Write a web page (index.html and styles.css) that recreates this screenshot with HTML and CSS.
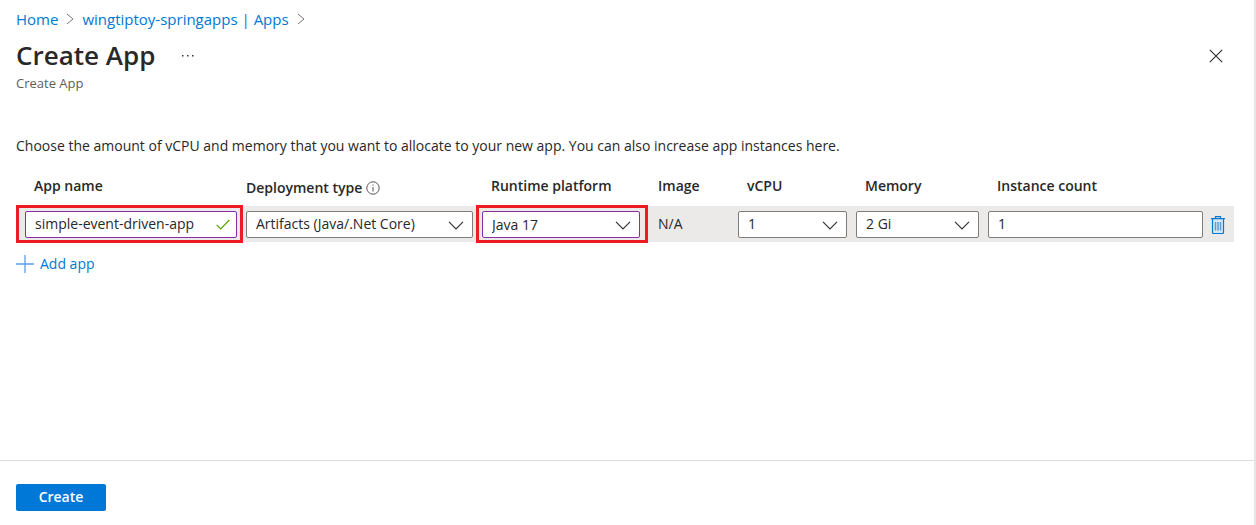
FILE: index.html
```
<!DOCTYPE html>
<html lang="en">
<head>
<meta charset="utf-8">
<title>Create App</title>
<link rel="stylesheet" href="styles.css">
</head>
<body>
<div class="blade">
  <header class="top">
    <nav class="breadcrumb" aria-label="Breadcrumb">
      <a href="#">Home</a>
      <svg class="crumb-sep" viewBox="0 0 8 12" aria-hidden="true"><path d="M1 1l6 5-6 5"/></svg>
      <a href="#">wingtiptoy-springapps | Apps</a>
      <svg class="crumb-sep" viewBox="0 0 8 12" aria-hidden="true"><path d="M1 1l6 5-6 5"/></svg>
    </nav>
    <div class="title-row">
      <h1>Create App</h1>
      <button class="icon-button more" type="button" aria-label="More">
        <svg viewBox="0 0 14 4" width="14" height="4"><path d="M1 1h1.500v1.500H1zM6 1h1.500v1.500H6zM11 1h1.500v1.500H11z"/></svg>
      </button>
      <button class="icon-button close" type="button" aria-label="Close">
        <svg viewBox="0 0 14 14" width="14" height="14"><path d="M.8.8l12.400 12.400M13.200.8L.8 13.200"/></svg>
      </button>
    </div>
    <p class="subtitle">Create App</p>
  </header>

  <main class="content">
    <p class="intro">Choose the amount of vCPU and memory that you want to allocate to your new app. You can also increase app instances here.</p>
    <table class="apps">
      <colgroup>
        <col class="col-name"><col class="col-type"><col class="col-runtime"><col class="col-image">
        <col class="col-cpu"><col class="col-memory"><col class="col-count"><col class="col-delete">
      </colgroup>
      <thead>
        <tr>
          <th class="head-name"><label for="name">App name</label></th>
          <th class="head-type"><span class="with-info"><label for="type">Deployment type</label>
            <svg class="info" viewBox="0 0 14 14" aria-hidden="true"><circle cx="7" cy="7" r="6.200"/><path d="M7 6v4.500M7 3.500v1.200"/></svg></span></th>
          <th class="head-runtime"><label for="runtime">Runtime platform</label></th>
          <th class="head-image">Image</th>
          <th class="head-inset"><label for="cpu">vCPU</label></th>
          <th class="head-inset"><label for="memory">Memory</label></th>
          <th class="head-inset"><label for="count">Instance count</label></th>
          <td></td>
        </tr>
      </thead>
      <tbody>
        <tr>
          <td class="cell-name"><div class="highlight highlight-name"><div class="field valid">
            <input id="name" type="text" value="simple-event-driven-app">
            <svg class="check" viewBox="0 0 14 11" aria-hidden="true"><path d="M.7 5.800l4 4L13.300 1"/></svg>
          </div></div></td>
          <td class="cell-type"><div class="field">
            <select id="type"><option>Artifacts (Java/.Net Core)</option></select>
            <svg class="chevron" viewBox="0 0 16 9" aria-hidden="true"><path d="M1 .8l7 7 7-7"/></svg>
          </div></td>
          <td class="cell-runtime"><div class="highlight highlight-runtime"><div class="field changed">
            <select id="runtime"><option>Java 17</option></select>
            <svg class="chevron" viewBox="0 0 16 9" aria-hidden="true"><path d="M1 .8l7 7 7-7"/></svg>
          </div></div></td>
          <td class="cell-image">N/A</td>
          <td class="cell-inset"><div class="field">
            <select id="cpu"><option>1</option></select>
            <svg class="chevron" viewBox="0 0 16 9" aria-hidden="true"><path d="M1 .8l7 7 7-7"/></svg>
          </div></td>
          <td class="cell-inset"><div class="field">
            <select id="memory"><option>2 Gi</option></select>
            <svg class="chevron" viewBox="0 0 16 9" aria-hidden="true"><path d="M1 .8l7 7 7-7"/></svg>
          </div></td>
          <td class="cell-inset"><div class="field"><input id="count" type="text" value="1"></div></td>
          <td class="cell-delete"><button class="icon-button delete" type="button" aria-label="Delete">
            <svg viewBox="0 0 16 18" width="16" height="18"><path class="bin" d="M2.500 3v13.500a1 1 0 0 0 1 1h9a1 1 0 0 0 1-1V3"/><path class="lid" d="M1 2.700h14M5.500 2.500V.6h5v1.900"/><path class="bars" d="M5.500 6v8.500M8 6v8.500M10.500 6v8.500"/></svg>
          </button></td>
        </tr>
      </tbody>
    </table>
    <button class="add" type="button">
      <svg viewBox="0 0 18 18" width="18" height="18" aria-hidden="true"><path d="M9 0v18M0 9h18"/></svg>
      <span>Add app</span>
    </button>
  </main>

  <footer class="footer"><button class="primary" type="button">Create</button></footer>
</div>
</body>
</html>
```
FILE: styles.css
```
* { box-sizing: border-box; }
body {
  margin: 0;
  background: #fff;
  color: #292827;
  font: 14px/20px "Open Sans", "Noto Sans", sans-serif;
}
button, input, select { font: inherit; color: inherit; }
button { cursor: pointer; }
h1, p { margin: 0; }
svg { display: block; flex: none; fill: none; }

.blade {
  display: flex;
  flex-direction: column;
  min-height: 100vh;
  border-right: 2px solid #e6e6e6;
}

.top { padding: 9px 28px 0 16px; }
.breadcrumb { display: flex; align-items: center; gap: 8px; font-size: 15px; }
.breadcrumb a { color: #0078d4; text-decoration: none; }
.crumb-sep { width: 8px; height: 12px; stroke: #777; }
.title-row { display: flex; align-items: center; height: 34px; margin-top: 9px; }
h1 { font-size: 26px; line-height: 34px; font-weight: 600; }
.icon-button { padding: 0; border: 0; background: none; }
.more { margin-left: 26px; padding-top: 2px; }
.more path { fill: #333; }
.close { margin-left: auto; padding: 5px 3px 3px; }
.close path { stroke: #333; stroke-width: 1.200; }
.subtitle { padding-top: 1px; color: #605e5c; font-size: 13px; line-height: 20px; }

.content { flex: 1; padding: 43px 20px 0 16px; }
.intro { margin-bottom: 18px; }

.apps { width: 100%; border-collapse: collapse; table-layout: fixed; }
.col-name, .col-type { width: 230px; }
.col-runtime { width: 176px; }
.col-image { width: 80px; }
.col-cpu { width: 118px; }
.col-memory { width: 132px; }
.col-delete { width: 28px; }
.apps th { height: 32px; padding: 2px 0 0; font-weight: 600; text-align: left; vertical-align: top; white-space: nowrap; }
.apps td { padding: 0; }
.apps .head-name { padding-left: 18px; }
.apps .head-type { padding-top: 4px; }
.apps .head-runtime, .apps .head-inset { padding-left: 15px; }
.apps .head-image { padding-left: 6px; }
.with-info { display: flex; align-items: center; gap: 4px; }
.info { width: 14px; height: 14px; stroke: #555; }

.apps tbody tr { height: 36px; background: #ebeae9; }
.apps .cell-name, .apps .cell-type { padding-right: 3px; }
.apps .cell-runtime { padding-right: 4px; }
.apps .cell-image { padding-left: 6px; }
.apps .cell-inset { padding: 0 3px 0 6px; }
.apps .cell-delete { padding-left: 4px; }

.highlight { margin: -1px 0; padding: 3px 3px 2px 6px; border: 3px solid #ed1c24; }
.highlight-runtime { padding: 3px 5px 2px 3px; }
.field { position: relative; }
.field input, .field select {
  display: block;
  width: 100%;
  height: 27px;
  padding: 0 9px;
  border: 1px solid #7f7d7b;
  border-radius: 2px;
  background: #fff;
  appearance: none;
}
.field input { padding-bottom: 2px; }
.valid input, .changed select { border-color: #8a2da5; }
.check, .chevron { position: absolute; pointer-events: none; }
.check { width: 14px; height: 11px; right: 7px; top: 8px; stroke: #57a300; stroke-width: 1.200; }
.chevron { width: 16px; height: 9px; right: 9px; top: 10px; stroke: #333; stroke-width: 1.200; }

.delete { display: block; padding-top: 1px; }
.delete .bin { stroke: #0078d4; fill: #d5e6f4; stroke-width: 1.200; }
.delete .lid { stroke: #0078d4; stroke-width: 1.200; }
.delete .bars { stroke: #559fdc; stroke-width: 1.500; }

.add {
  display: flex;
  align-items: center;
  gap: 6px;
  margin-top: 12px;
  padding: 0;
  border: 0;
  background: none;
  color: #0078d4;
}
.add svg { stroke: #5e9ee8; stroke-width: 1.300; }

.footer { padding: 23px 16px 14px; border-top: 1px solid #dcdcdc; }
.primary {
  display: block;
  width: 90px;
  height: 27px;
  padding: 0 0 2px;
  border: 0;
  border-radius: 2px;
  background: #0078d7;
  color: #fff;
  font-weight: 600;
}
```
